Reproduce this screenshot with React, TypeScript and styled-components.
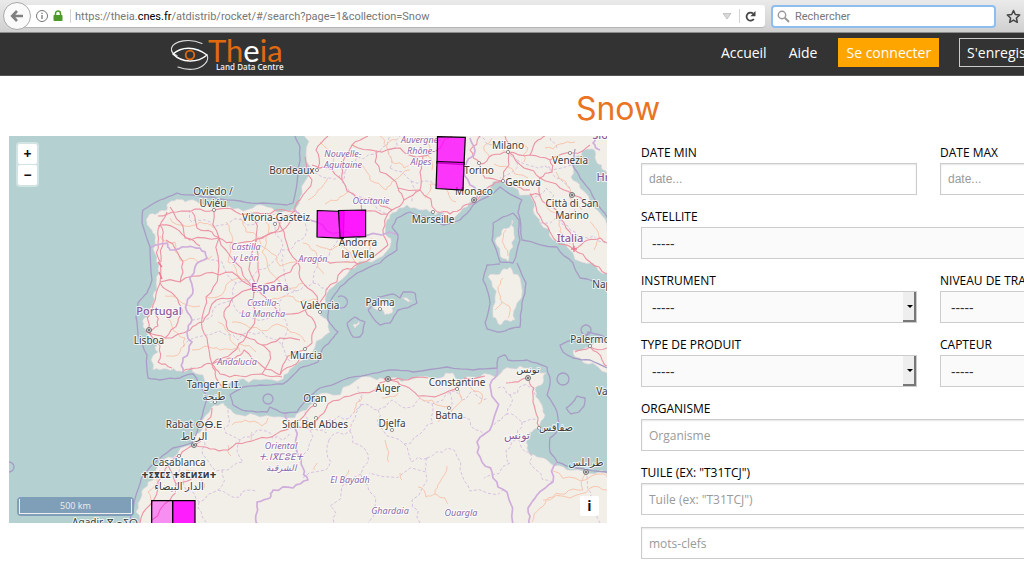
import React from "react";
import styled, { createGlobalStyle } from "styled-components";

const GlobalStyle = createGlobalStyle`
  *, *::before, *::after { box-sizing: border-box; }
  body {
    margin: 0;
    overflow-x: hidden;
    background: #fff;
    color: #000;
    font-family: "Open Sans", "Noto Sans", sans-serif;
    font-size: 12px;
  }
`;

/* ---------- browser toolbar ---------- */

const Toolbar = styled.div`
  display: flex;
  align-items: center;
  height: 33px;
  padding: 0 3px;
  background: linear-gradient(#eaeaea, #d0d0d0);
  border-bottom: 1px solid #8c8c8c;
  font-family: Roboto, sans-serif;
  font-size: 11px;
`;

const BackButton = styled.button`
  display: grid;
  place-items: center;
  flex: none;
  width: 28px;
  height: 28px;
  margin-right: -8px;
  padding: 0;
  z-index: 1;
  border: 1px solid #a9a9a9;
  border-radius: 50%;
  background: #fafafa;
`;

const AddressBar = styled.div`
  display: flex;
  align-items: center;
  flex: 1;
  min-width: 0;
  height: 22px;
  padding: 0 8px 0 12px;
  gap: 4px;
  border-radius: 3px;
  background: #fff;
  box-shadow: 0 1px 1px rgba(0, 0, 0, 0.15);
`;

const Separator = styled.span`
  width: 1px;
  height: 14px;
  margin: 0 0 0 3px;
  background: #d4d4d4;
`;

const Url = styled.span`
  flex: 1;
  overflow: hidden;
  white-space: nowrap;
  color: #777;
  b { font-weight: 400; color: #000; }
`;

const IconButton = styled.button`
  display: grid;
  place-items: center;
  flex: none;
  padding: 0;
  border: 0;
  background: none;
`;

const SearchBox = styled.label`
  display: flex;
  align-items: center;
  gap: 5px;
  width: 225px;
  height: 23px;
  margin: 0 10px 0 6px;
  padding: 0 4px;
  border: 2px solid #8ebdf0;
  border-radius: 4px;
  background: #fff;
  input {
    flex: 1;
    min-width: 0;
    padding: 0;
    border: 0;
    outline: 0;
    background: none;
    font: inherit;
    &::placeholder { color: #777; opacity: 1; }
  }
`;

/* ---------- site ---------- */

const Site = styled.div`
  min-width: 1236px;
`;

const Header = styled.header`
  display: flex;
  justify-content: center;
  height: 43px;
  background: #333;
  border-bottom: 1px solid #555;
`;

const HeaderInner = styled.div`
  display: flex;
  align-items: center;
  justify-content: space-between;
  width: 900px;
`;

const Nav = styled.nav`
  display: flex;
  align-items: center;
  gap: 20px;
  padding: 0 10px 4px 0;
`;

const NavLink = styled.a<{ $kind?: "solid" | "outline" }>`
  padding: ${(p) => (p.$kind ? "0 7px" : "0")};
  border: 1px solid
    ${(p) => (p.$kind === "solid" ? "#ffa500" : p.$kind === "outline" ? "#ccc" : "transparent")};
  background: ${(p) => (p.$kind === "solid" ? "#ffa500" : "transparent")};
  color: #fff;
  font-size: 14px;
  line-height: 27px;
  text-decoration: none;
`;

const Title = styled.h1`
  margin: 0;
  padding-top: 6px;
  color: #e87424;
  font-family: Inter, sans-serif;
  font-size: 32px;
  font-weight: 400;
  line-height: 54px;
  text-align: center;
`;

const Columns = styled.main`
  display: grid;
  grid-template-columns: 1fr 1fr;
`;

const MapPane = styled.section`
  position: relative;
  height: 387px;
  margin: 0 11px 0 9px;
  svg { display: block; width: 100%; height: 100%; }
`;

const ZoomControls = styled.div`
  position: absolute;
  top: 6px;
  left: 7px;
  display: grid;
  gap: 1px;
  padding: 2px;
  border-radius: 4px;
  background: rgba(255, 255, 255, 0.4);
`;

const MapButton = styled.button`
  width: 19px;
  height: 20px;
  padding: 0;
  border: 0;
  border-radius: 2px;
  background: #fff;
  color: #111;
  font: 700 14px/20px "Open Sans", sans-serif;
`;

const InfoCorner = styled.div`
  position: absolute;
  right: 8px;
  bottom: 7px;
  display: grid;
`;

const ScaleLine = styled.div`
  position: absolute;
  left: 8px;
  bottom: 7px;
  width: 117px;
  padding: 2px;
  border-radius: 4px;
  background: #7f9fb9;
  div {
    border: 1px solid #eee;
    border-top: 0;
    color: #eee;
    font-size: 9px;
    line-height: 14px;
    text-align: center;
  }
`;

const Form = styled.form`
  display: grid;
  grid-template-columns: 1fr 1fr;
  column-gap: 23px;
  row-gap: 12px;
  align-content: start;
  padding: 7px 20px 17px 23px;
`;

const FieldBox = styled.div<{ $wide?: boolean }>`
  grid-column: ${(p) => (p.$wide ? "1 / -1" : "auto")};
  min-width: 0;
  label {
    display: block;
    line-height: 20px;
    white-space: nowrap;
  }
`;

const TextInput = styled.input<{ $plain?: boolean }>`
  display: block;
  width: 100%;
  height: 32px;
  padding: 0 7px;
  border: 1px solid #ccc;
  border-radius: 0;
  background: #fff;
  box-shadow: inset 0 1px 2px rgba(0, 0, 0, 0.1);
  font-family: ${(p) => (p.$plain ? '"Liberation Sans", sans-serif' : "inherit")};
  font-size: 12px;
  &::placeholder { color: #9a9a9a; opacity: 1; }
`;

const SelectWrap = styled.div`
  position: relative;
  &::before {
    content: "";
    position: absolute;
    top: 1px;
    right: 1px;
    width: 13px;
    height: 30px;
    border: solid #777;
    border-width: 0 2px 2px 0;
    background: #eee;
    pointer-events: none;
  }
  &::after {
    content: "";
    position: absolute;
    top: 14px;
    right: 4px;
    border: solid transparent;
    border-width: 3px 3px 0;
    border-top-color: #000;
    pointer-events: none;
  }
`;

const Select = styled.select`
  appearance: none;
  display: block;
  width: 100%;
  height: 32px;
  padding: 0 10px;
  border: 1px solid #ccc;
  border-radius: 0;
  background: #fafafa;
  color: #333;
  font-family: inherit;
  font-size: 14px;
`;

/* ---------- map drawing ---------- */

type Pt = [number, number];

const parse = (s: string): Pt[] =>
  s.trim().split(/\s+/).map((p) => p.split(",").map(Number) as Pt);

const noise = (x: number, y: number) => {
  const v = Math.sin(x * 12.9898 + y * 78.233) * 43758.5453;
  return v - Math.floor(v) - 0.5;
};

/* Adds small irregularities between the given points, as coasts and roads have. */
function rough(s: string, closed = false, amount = 0.3) {
  let pts = parse(s);
  if (closed) pts = [...pts, pts[0]];
  for (let pass = 0; pass < 2; pass++) {
    const next: Pt[] = [];
    for (let i = 0; i < pts.length - 1; i++) {
      const [x1, y1] = pts[i];
      const [x2, y2] = pts[i + 1];
      const k = noise(x1 + x2, y1 + y2) * amount;
      next.push(pts[i], [(x1 + x2) / 2 - (y2 - y1) * k, (y1 + y2) / 2 + (x2 - x1) * k]);
    }
    next.push(pts[pts.length - 1]);
    pts = next;
  }
  return "M" + pts.map(([x, y]) => `${x.toFixed(1)} ${y.toFixed(1)}`).join("L") + (closed ? "Z" : "");
}

const land = [
  "306,130 306,153 304,183 300,197 295,209 285,211 267,207 253,208 233,209 217,207 200,204 185,202 177,199 170,202 167,210 158,213 148,217 147,222 152,230 155,240 157,257 159,273 157,290 153,303 147,317 143,327 147,333 157,342 158,352 153,370 167,369 180,371 192,367 203,375 208,385 217,388 227,387 237,380 260,380 283,379 293,367 300,361 305,357 315,347 330,332 328,327 320,315 325,300 333,287 350,270 372,262 390,247 388,237 386,223 392,213 407,205 423,210 435,215 450,217 463,208 477,202 490,188 500,180 513,187 530,195 533,210 540,223 553,240 573,253 593,263 607,273 615,275 615,240 607,225 593,207 580,188 571,177 573,160 587,149 595,151 597,163 603,170 607,178 615,185 615,0 306,0",
  "512,220 514,230 513,247 508,262 500,253 497,237 502,230 510,227",
  "510,267 520,278 517,303 515,320 507,320 500,325 493,317 495,297 488,277 500,274",
  "373,308 384,301 395,305 392,313 385,315 380,309",
  "402,298 407,298 412,301 408,302",
  "353,325 359,321 358,325 355,328",
  "137,530 136,512 142,495 148,482 158,465 173,458 193,445 203,428 212,407 223,403 227,408 240,415 260,417 287,418 300,412 310,405 327,393 350,385 377,380 390,378 413,379 440,378 453,373 473,377 495,377 503,370 520,366 533,375 546,373 543,383 535,390 540,402 545,415 538,428 527,437 527,448 537,457 550,463 567,470 587,473 615,478 615,900 137,900",
  "573,350 590,347 615,346 615,371 593,363 575,357",
];

const maritime = [
  "295,136 300,147 298,173 293,203 287,205 263,203 240,201 213,197 193,195 177,193 160,200 143,210 142,223 150,247 152,280 147,293 138,303 136,317 138,335 147,355 148,378 160,380 180,378 193,374 200,385 208,397 200,422 193,442 173,448 160,458 143,475 137,492 132,512 130,525",
  "607,287 580,278 573,263 557,247 522,240 518,212 522,200 500,187 473,205 460,220 443,225 433,218 410,212 397,218 392,227 398,235 397,250 380,263 357,273 340,287 330,303 328,320 338,332 333,338 323,348 318,362 310,365 300,368 283,384 260,385 243,387 230,395 233,405 247,411 267,412 270,407 283,413 297,412 307,398 320,388 343,380 367,375 390,370 413,372 447,367 473,370 497,368 498,358 505,355 508,360 527,360 547,367 550,378 547,395 557,412 560,428 550,438 550,452 557,462 577,468 607,472",
  "513,213 493,223 492,240 500,262 513,263 520,240 519,220 513,213",
  "500,264 487,265 483,280 490,303 485,323 487,329 497,332 513,328 520,327 522,303 526,283 517,263",
  "368,310 378,297 393,294 400,298 403,292 415,293 417,303 407,308 398,310 390,323 380,325 368,310",
  "347,323 355,317 365,322 363,332 360,337 353,337 347,323",
  "607,368 590,360 573,358 563,352 560,345 568,341 585,342 588,332 595,334 607,338",
  "575,149 573,165 580,178 590,190 596,202 607,217",
  "566,408 573,402 577,396 585,398 584,406 579,412 571,414 566,408",
];

const borders = [
  "150,248 158,245 167,243 170,250 187,247 200,248 207,258 195,267 193,290 187,303 192,320 187,332 192,342 183,358 183,373",
  "293,209 300,216 317,222 340,232 365,236 398,235",
  "285,413 295,428 297,452 303,468 308,480 293,488 273,490 270,498 257,502 257,512 258,525",
  "497,368 490,385 492,425 477,442 482,462 493,478 507,492 513,525",
  "557,462 553,482 537,495 528,508 529,525",
  "473,205 477,194 470,185 466,165 474,155 470,138",
  "597,136 593,143 600,150",
];

const regions = [
  "189,210 192,222 208,221 216,226 234,219 247,225 264,216 283,214",
  "207,258 222,262 236,283 258,270 280,252 275,228 283,214",
  "192,320 212,316 232,300 236,283", "232,300 252,318 280,310 296,291 284,270 280,252",
  "183,346 212,334 238,340 262,332 282,345 292,362", "282,345 287,324 280,310",
  "296,291 313,283 330,292", "313,283 318,262 335,245 338,236", "300,216 305,236 290,250 280,252",
  "307,167 330,178 345,171 350,192 370,204 386,214", "345,171 357,157 380,151 390,136",
  "390,168 411,181 412,203", "390,168 388,150 400,136", "411,181 436,186", "478,136 500,147 517,160 500,178",
  "517,160 545,166 571,165", "530,195 546,188 556,204 575,206 583,218", "575,206 570,188 556,178 545,166",
  "540,223 560,220 575,232 593,236 607,243", "557,148 550,138",
  "228,410 224,428 240,440 257,430 272,438 290,433", "240,440 243,462 222,470 206,458 204,440",
  "222,470 218,490 199,502 186,490 180,466", "218,490 240,497 256,491", "199,502 206,522",
  "305,412 310,430 326,433 329,420 350,418 361,405 358,386", "310,430 303,455", "329,440 331,462 303,478",
  "329,440 350,431 361,405", "350,431 364,448 361,474 369,491 368,523", "361,405 378,410 392,400 405,408 420,398 432,404 450,392 462,400 475,391 488,398",
  "378,410 383,430 404,444 411,462 427,458", "404,444 424,430 433,412 432,404", "450,392 453,415 470,420 484,436",
  "427,458 426,472 369,473", "427,458 447,448 460,470 470,491 505,488", "420,523 412,500 426,472", "361,474 330,506 334,523",
  "498,388 510,395 521,386 535,395", "510,395 507,414 522,422 538,420", "507,414 494,425", "522,422 520,440 506,450 510,463 484,478",
  "520,440 530,452 536,470 553,482", "587,476 590,500 600,523",
];

const primary = [
  "295,211 283,216 275,232 257,239 250,263 254,288", "254,288 235,262 219,238 214,210", "254,288 233,298 212,304 203,322 190,330 165,338 148,332",
  "254,288 268,300 279,317 305,310 320,306", "254,288 279,277 298,262 318,258 343,262 358,264", "254,288 255,318 246,337 233,352 212,364",
  "254,288 232,272 206,273 180,282 160,282", "160,225 158,243 160,262 160,283 153,305 148,332", "167,212 160,225 163,240 161,262",
  "148,332 160,346 158,362 172,368", "183,371 198,368 212,364 216,378 223,387", "212,364 235,358 244,350 262,366 280,375",
  "212,364 207,338 202,318 206,297 218,275 219,238", "214,210 236,212 253,213 270,214 295,211", "253,213 256,239 258,262 254,288",
  "158,216 177,212 195,209 214,210", "158,226 175,228 190,240 219,238", "170,207 180,222 185,238 200,246",
  "275,217 285,238 298,262", "219,238 235,244 257,239 275,232 288,225 296,213", "305,310 316,327 312,343 304,350 288,356 280,375",
  "320,306 326,290 343,270 358,264 388,245", "298,262 303,283 318,303", "388,245 385,225 392,210 404,200 420,190 437,212",
  "305,157 312,180 300,200 295,211", "312,165 328,168 342,180 357,198 362,212 388,214", "342,180 343,162 352,145 368,136",
  "328,136 316,150 318,168", "352,145 376,151 400,148 423,156 437,150", "423,156 420,172 420,190", "392,210 372,198 357,198",
  "376,151 380,172 398,188 404,200", "398,188 420,190", "437,212 450,214 463,206 478,199 490,186 502,181 518,187 530,190",
  "480,164 492,155 508,152 530,155 550,160 573,153 590,145", "480,164 485,178 502,181 509,165 508,152 505,136", "480,164 470,150 480,136",
  "508,152 524,168 540,178 560,188 576,196 590,208", "540,178 540,196 530,194 537,212 550,232 574,249 590,262 607,274",
  "540,196 556,210 566,228 574,249", "574,249 588,240 600,238 607,243", "550,160 552,172 540,178", "530,155 538,140 545,136", "437,150 445,139 452,136",
  "212,408 206,425 195,445 180,456 168,465 158,482 150,505 140,523", "195,445 210,449 228,450 247,442 267,438 286,430 308,428 317,420 328,404 350,396 375,390 388,379",
  "168,465 176,484 170,500 152,520", "176,484 190,480 200,478", "388,379 405,386 418,396 440,395 457,388 465,378 485,376", "388,379 408,380 428,378",
  "315,405 300,420 288,425", "528,378 518,382 506,383", "528,378 534,388 533,402 538,418 539,428", "575,352 590,347 607,348", "590,347 602,360 607,366",
  "192,212 197,228 212,232 219,238", "160,283 175,296 182,310 178,322 165,338", "166,240 176,250 183,262 180,282", "150,333 158,326 155,312",
  "233,298 224,312 228,330 246,337", "280,375 296,364 305,353", "246,337 262,345 270,352 268,364 262,374", "262,345 280,338 300,340", "212,364 220,374 240,376 262,374 282,377",
];

const secondary = [
  "170,218 185,226 200,222 214,228", "160,236 175,242 180,260 198,262 212,256", "165,296 178,300 200,306", "162,310 172,326 185,338 180,352 166,356",
  "206,297 225,290 240,278 250,284", "226,222 233,240 228,262 240,278", "240,218 246,232 268,250 280,266 298,262", "264,218 268,234 262,252 270,272 288,290 303,283",
  "232,322 250,328 272,326 290,332 305,342", "218,322 230,340 240,352", "270,300 285,296 300,302 318,300", "192,350 205,346 220,350 240,344 256,352",
  "303,243 312,250 318,258 324,274", "340,245 350,252 356,264", "368,240 368,252 374,258", "316,245 330,250 340,245 362,242 372,238",
  "320,142 335,155 330,168", "328,178 318,190 308,200", "362,165 370,180 386,190 395,180 410,170", "386,146 392,162 404,168 415,162", "348,192 338,200 325,204",
  "425,198 430,184 448,192 456,202", "430,140 428,156 432,170", "380,136 386,146 396,140", "494,164 515,174 528,178", "517,142 528,148 524,162",
  "545,148 560,144 575,142", "556,172 566,182 570,198 582,210", "545,202 558,218 560,232 570,244", "590,222 598,232 594,250", "489,156 484,146 492,138",
  "503,278 498,290 502,302 510,308 508,318", "502,302 495,310", "506,230 504,245 508,256", "232,425 245,420 262,426 268,418", "228,445 231,456", "252,432 250,442",
  "160,470 148,492 152,505", "186,470 200,474 204,488", "385,440 388,456 389,462", "447,466 440,482 435,494 426,497 418,487", "435,494 445,498 448,504",
  "418,396 432,400 450,406", "457,388 462,400 452,410 438,422", "396,378 396,396 382,398", "470,384 482,394 478,404", "354,413 356,404 362,397",
  "553,471 575,478 598,474 607,477", "585,474 583,490 565,494 548,498 540,508 532,522", "607,490 590,488 570,498 543,500", "317,463 314,470", "400,473 402,480", "349,470 346,485",
];

interface Place { x: number; y: number; lines: string[]; kind?: "country" | "region" | "tifinagh" }

const places: Place[] = [
  { x: 508, y: 149, lines: ["Milano"] },
  { x: 570, y: 164, lines: ["Venezia"] },
  { x: 479, y: 174, lines: ["Torino"] },
  { x: 523, y: 186, lines: ["Genova"] },
  { x: 474, y: 195, lines: ["Monaco"] },
  { x: 572, y: 207, lines: ["Città di San", "Marino"] },
  { x: 433, y: 223, lines: ["Marseille"] },
  { x: 292, y: 174, lines: ["Bordeaux"] },
  { x: 213, y: 195, lines: ["Oviedo /", "Uviéu"] },
  { x: 276, y: 221, lines: ["Vitoria-Gasteiz"] },
  { x: 358, y: 246, lines: ["Andorra", "la Vella"] },
  { x: 320, y: 309, lines: ["València"] },
  { x: 380, y: 306, lines: ["Palma"] },
  { x: 149, y: 344, lines: ["Lisboa"] },
  { x: 306, y: 359, lines: ["Murcia"] },
  { x: 590, y: 343, lines: ["Palermo"] },
  { x: 602, y: 288, lines: ["Nap"] },
  { x: 602, y: 395, lines: ["Va"] },
  { x: 214, y: 388, lines: ["Tanger ⴹ.ⵏⵊ.", "طنجة"] },
  { x: 194, y: 428, lines: ["Rabat ⵔⴱ.ⴹ", "الرباط"] },
  { x: 179, y: 466, lines: ["Casablanca"] },
  { x: 179, y: 478, lines: ["ⵜⵉⴳⵎⵉ ⵜⵓⵎⵍⵉⵍⵜ"], kind: "tifinagh" },
  { x: 179, y: 490, lines: ["الدار البيضاء"] },
  { x: 105, y: 526, lines: ["Agadir. ⴳ ⴰⵉⵔ"] },
  { x: 315, y: 402, lines: ["Oran"] },
  { x: 315, y: 428, lines: ["Sidi Bel Abbes"] },
  { x: 388, y: 392, lines: ["Alger"] },
  { x: 457, y: 386, lines: ["Constantine"] },
  { x: 449, y: 419, lines: ["Batna"] },
  { x: 392, y: 427, lines: ["Djelfa"] },
  { x: 528, y: 373, lines: ["تونس"] },
  { x: 556, y: 431, lines: ["صفاقس"] },
  { x: 586, y: 466, lines: ["طرابلس"] },
  { x: 270, y: 291, lines: ["España"], kind: "country" },
  { x: 159, y: 315, lines: ["Portugal"], kind: "country" },
  { x: 570, y: 242, lines: ["Italia"], kind: "country" },
  { x: 517, y: 439, lines: ["تونس"], kind: "country" },
  { x: 603, y: 181, lines: ["Hr"], kind: "country" },
  { x: 600, y: 139, lines: ["Slo"], kind: "country" },
  { x: 343, y: 157, lines: ["Nouvelle-", "Aquitaine"], kind: "region" },
  { x: 421, y: 143, lines: ["Auvergne-", "Rhône-", "Alpes"], kind: "region" },
  { x: 371, y: 204, lines: ["Occitanie"], kind: "region" },
  { x: 246, y: 250, lines: ["Castilla", "y León"], kind: "region" },
  { x: 313, y: 262, lines: ["Aragón"], kind: "region" },
  { x: 263, y: 306, lines: ["Castilla-", "La Mancha"], kind: "region" },
  { x: 237, y: 365, lines: ["Andalucía"], kind: "region" },
  { x: 281, y: 449, lines: ["Oriental", "ⵜ.ⵏⴳⵎⵓⴹⵜ", "الشرقية"], kind: "region" },
  { x: 350, y: 483, lines: ["El Bayadh"], kind: "region" },
  { x: 390, y: 514, lines: ["Ghardaia"], kind: "region" },
  { x: 461, y: 516, lines: ["Ouargla"], kind: "region" },
];

const towns = parse("508,152 570,153 479,163 503,181 433,212 317,170 214,210 275,224 320,312 380,309 305,349 590,346 215,402 179,456 315,405 316,418 457,389 449,408 392,430 539,428");
const capitals = parse("474,200 572,195 149,330 194,445 388,379 528,378 586,472");

const MapSvg = styled.svg`
  text {
    font-family: "Noto Sans", "DejaVu Sans", sans-serif;
    font-size: 10px;
    text-anchor: middle;
    fill: #3c3c3c;
    stroke: rgba(255, 255, 255, 0.75);
    stroke-width: 2px;
    stroke-linejoin: round;
    paint-order: stroke;
  }
  text.region { font-size: 9px; font-style: italic; fill: #8d68a8; }
  text.country { font-size: 11px; font-weight: 500; fill: #8b5a9b; }
  text.tifinagh { font-size: 8px; font-weight: 700; }
`;

function MapDrawing() {
  return (
    <MapSvg viewBox="9 136 598 387" preserveAspectRatio="xMidYMid slice" role="img" aria-label="Carte">
      <rect x="-600" y="136" width="1800" height="387" fill="#b5d0d0" />
      <g fill="#f2efe9" stroke="#e3d5dc" strokeWidth="0.6">
        {land.map((s) => <path key={s} d={rough(s, true, 0.5)} />)}
      </g>
      <g fill="none" strokeLinejoin="round">
        <g stroke="#d3bcdf" strokeWidth="0.9" strokeDasharray="3 2">
          {regions.map((s) => <path key={s} d={rough(s, false, 0.5)} />)}
        </g>
        <g stroke="#f8c6ae" strokeWidth="1">
          {secondary.map((s) => <path key={s} d={rough(s, false, 0.4)} />)}
        </g>
        <g stroke="#ec93a4" strokeWidth="1.1">
          {primary.map((s) => <path key={s} d={rough(s)} />)}
        </g>
        <g stroke="#cfaedb" strokeWidth="1.7">
          {borders.map((s) => <path key={s} d={rough(s, false, 0.4)} />)}
        </g>
        <g stroke="#a79cc6" strokeWidth="1.3">
          {maritime.map((s) => <path key={s} d={rough(s, false, 0.12)} />)}
          <circle cx="268" cy="399" r="5" />
          <path d="M338 297A6 6 0 1 1 338 307" />
          <circle cx="586" cy="330" r="5" />
          <circle cx="563" cy="379" r="6" />
          <circle cx="9" cy="467" r="5" />
        </g>
        <g stroke="#f0788f" strokeWidth="1.4">
          <path d="M250 289l9 0M254 285l0 8M251 286l7 6M146 331l5 3M571 249l6 0M574 246l0 6M158 262l4 5M159 272l3 7M384 379l8 1" />
        </g>
      </g>
      <g fill="#fff" stroke="#777" strokeWidth="0.8">
        {towns.map(([x, y]) => <circle key={`${x}-${y}`} cx={x} cy={y} r="1.6" />)}
      </g>
      <g fill="#ddd" stroke="#666" strokeWidth="0.9">
        {capitals.map(([x, y]) => (
          <g key={`${x}-${y}`}>
            <circle cx={x} cy={y} r="2.5" />
            <circle cx={x} cy={y} r="0.8" fill="#666" />
          </g>
        ))}
      </g>
      {places.map((p) =>
        p.lines.map((line, i) => (
          <text key={line + p.x} className={p.kind} x={p.x} y={p.y + i * (p.kind ? 11 : 12)}>{line}</text>
        ))
      )}
      <g fill="#f0f" stroke="#000" strokeWidth="1.2">
        <path fillOpacity="0.78" d="M437.5 136.7L465.3 137.3L464 164.5L437 163Z" />
        <path fillOpacity="0.78" d="M437 161.5L464 162.5L463 190L436 188.5Z" />
        <path fillOpacity="0.78" d="M317.3 210.5L344 211.5L343.3 238.3L317 237Z" />
        <path fillOpacity="0.9" d="M338.5 210.5L365.6 210L365.6 236.7L340 237.5Z" />
        <path fillOpacity="0.4" d="M151.7 500.6H173V523.5H151.7Z" />
        <path fillOpacity="0.88" d="M172.7 500.6H195V523.5H172.7Z" />
      </g>
    </MapSvg>
  );
}

const LogoText = styled.text`
  font-family: Lato, sans-serif;
  font-size: 31px;
  font-weight: 400;
`;

const Tagline = styled.text`
  font-family: "Open Sans", sans-serif;
  font-size: 8px;
  font-weight: 600;
`;

function Logo() {
  return (
    <svg width="118" height="41" viewBox="168 34 118 41" role="img" aria-label="Theia Land Data Centre">
      <g fill="none" stroke="#ddd" strokeLinecap="round">
        <path strokeWidth="1.1" d="M202 43.5C190 38 174 40.500 171.500 48C171 51 173 54 177 55.500" />
        <path strokeWidth="1.5" stroke="#fff" d="M173 54C181 46.500 195 45.500 207 55C197 63.500 182 63 173 54Z" />
        <path strokeWidth="1.1" d="M207 55C210 61 203 67.500 195 69C189 70 183 69 178 67" />
      </g>
      <circle cx="190" cy="55" r="4.300" fill="none" stroke="#e06a10" strokeWidth="1.800" />
      <LogoText x="208" y="62" fill="#e06a10">
        Th<tspan fill="#fff">e</tspan>ia
      </LogoText>
      <Tagline x="216" y="70" fill="#eee">Land Data Centre</Tagline>
    </svg>
  );
}

/* ---------- form ---------- */

function TextField(props: { id: string; label: string; placeholder: string; wide?: boolean; plain?: boolean }) {
  return (
    <FieldBox $wide={props.wide}>
      <label htmlFor={props.id}>{props.label}</label>
      <TextInput id={props.id} placeholder={props.placeholder} $plain={props.plain} />
    </FieldBox>
  );
}

function SelectField(props: { id: string; label: string; wide?: boolean }) {
  return (
    <FieldBox $wide={props.wide}>
      <label htmlFor={props.id}>{props.label}</label>
      <SelectWrap>
        <Select id={props.id}>
          <option>-----</option>
        </Select>
      </SelectWrap>
    </FieldBox>
  );
}

export default function App() {
  return (
    <>
      <GlobalStyle />
      <Toolbar>
        <BackButton aria-label="Retour">
          <svg width="14" height="12" viewBox="0 0 14 12" fill="none" stroke="#808080" strokeWidth="2.600">
            <path d="M7 1L2.200 6L7 11M2.500 6H13" />
          </svg>
        </BackButton>
        <AddressBar>
          <svg width="14" height="14" viewBox="0 0 14 14" fill="none" stroke="#777">
            <circle cx="7" cy="7" r="5.500" />
            <path strokeWidth="1.300" d="M7 6V10M7 3.800V5" />
          </svg>
          <svg width="10" height="12" viewBox="0 0 10 12">
            <path d="M2.500 6V3.500a2.500 2.500 0 0 1 5 0V6" fill="none" stroke="#4c9a2a" strokeWidth="1.500" />
            <rect x="0.500" y="5" width="9" height="6" rx="0.800" fill="#4c9a2a" />
          </svg>
          <Separator />
          <Url>https://theia.<b>cnes.fr</b>/atdistrib/rocket/#/search?page=1&amp;collection=Snow</Url>
          <IconButton aria-label="Historique">
            <svg width="10" height="8" viewBox="0 0 10 8"><path d="M1 1.500H9L5 7Z" fill="#d8d8d8" stroke="#bbb" strokeWidth="0.800" /></svg>
          </IconButton>
          <Separator />
          <IconButton aria-label="Actualiser">
            <svg width="13" height="13" viewBox="0 0 13 13">
              <path d="M9.800 9A4 4 0 1 1 9 3.500" fill="none" stroke="#444" strokeWidth="1.800" />
              <path d="M11.500 1V6.200H6.300Z" fill="#444" />
            </svg>
          </IconButton>
        </AddressBar>
        <SearchBox>
          <svg width="13" height="13" viewBox="0 0 13 13" fill="none" stroke="#999">
            <circle cx="5" cy="5" r="3.700" strokeWidth="1.400" />
            <path d="M7.800 7.800L12 12" strokeWidth="2" />
          </svg>
          <input type="search" placeholder="Rechercher" aria-label="Rechercher" />
        </SearchBox>
        <IconButton aria-label="Marque-page">
          <svg width="15" height="15" viewBox="0 0 15 15">
            <path d="M7.500 1.500L9.300 5.500L13.700 6L10.400 9L11.300 13.300L7.500 11.100L3.700 13.300L4.600 9L1.300 6L5.700 5.500Z" fill="none" stroke="#444" strokeWidth="1.500" strokeLinejoin="round" />
          </svg>
        </IconButton>
      </Toolbar>
      <Site>
        <Header>
          <HeaderInner>
            <Logo />
            <Nav>
              <NavLink href="#accueil">Accueil</NavLink>
              <NavLink href="#aide">Aide</NavLink>
              <NavLink href="#connexion" $kind="solid">Se connecter</NavLink>
              <NavLink href="#inscription" $kind="outline">S'enregistrer</NavLink>
            </Nav>
          </HeaderInner>
        </Header>
        <Title>Snow</Title>
        <Columns>
          <MapPane>
            <MapDrawing />
            <ZoomControls>
              <MapButton aria-label="Zoom avant">+</MapButton>
              <MapButton aria-label="Zoom arrière">−</MapButton>
            </ZoomControls>
            <ScaleLine><div>500 km</div></ScaleLine>
            <InfoCorner><MapButton aria-label="Informations">i</MapButton></InfoCorner>
          </MapPane>
          <Form>
            <TextField id="min" label="DATE MIN" placeholder="date..." plain />
            <TextField id="max" label="DATE MAX" placeholder="date..." plain />
            <SelectField id="satellite" label="SATELLITE" wide />
            <SelectField id="instrument" label="INSTRUMENT" />
            <SelectField id="niveau" label="NIVEAU DE TRAITEMENT" />
            <SelectField id="type" label="TYPE DE PRODUIT" />
            <SelectField id="capteur" label="CAPTEUR" />
            <TextField id="organisme" label="ORGANISME" placeholder="Organisme" wide />
            <TextField id="tuile" label={'TUILE (EX: "T31TCJ")'} placeholder={'Tuile (ex: "T31TCJ")'} wide />
            <FieldBox $wide>
              <TextInput placeholder="mots-clefs" aria-label="mots-clefs" />
            </FieldBox>
          </Form>
        </Columns>
      </Site>
    </>
  );
}
